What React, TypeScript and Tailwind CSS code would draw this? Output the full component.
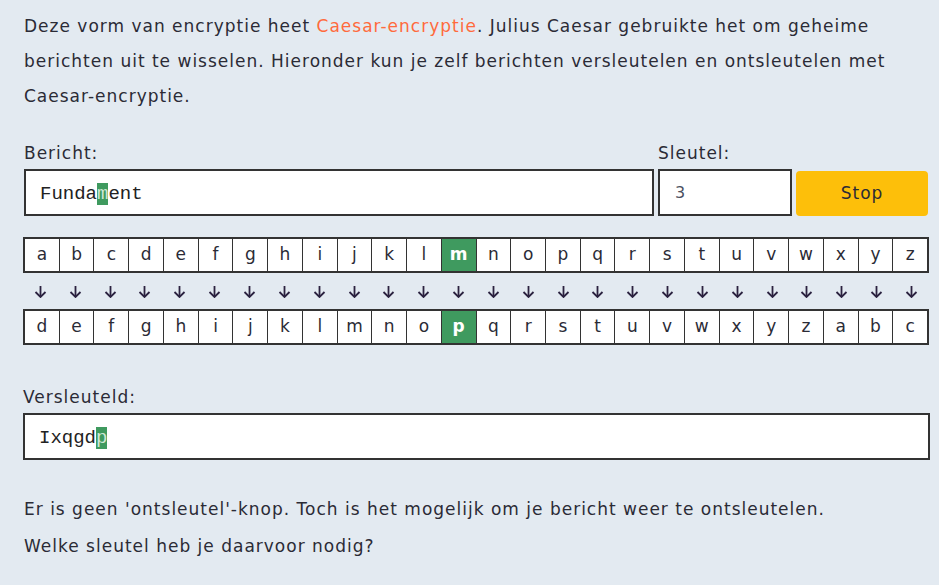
const PLAIN = 'abcdefghijklmnopqrstuvwxyz'.split('');
const KEY = 3;
const ACTIVE = 'm';

function LetterRow({ letters, active }: { letters: string[]; active: string }) {
  return (
    <div className="flex border-2 border-[#333] bg-white">
      {letters.map((ch, i) => (
        <div
          key={i}
          className={`flex-1 h-[32px] flex items-center justify-center text-[17px] ${
            i > 0 ? 'border-l border-[#333]' : ''
          } ${ch === active ? 'bg-[#3f9a5f] text-white font-semibold' : 'text-[#2b2b36]'}`}
        >
          {ch}
        </div>
      ))}
    </div>
  );
}

export default function App() {
  const shifted = PLAIN.map((_, i) => PLAIN[(i + KEY) % 26]);
  const activeOut = PLAIN[(PLAIN.indexOf(ACTIVE) + KEY) % 26];

  return (
    <div
      className="w-[939px] h-[585px] bg-[#e3eaf1] text-[#2b2b36] overflow-hidden"
      style={{ fontFamily: '"DejaVu Sans", "Open Sans", sans-serif' }}
    >
      <div className="pl-[23px] pr-[10px] pt-[9px] w-[939px]">
        <p className="text-[17px] leading-[35px] pl-[1px] tracking-[1px] w-[900px]">
          Deze vorm van encryptie heet <span className="text-[#ff6a3d]">Caesar-encryptie</span>. Julius Caesar
          gebruikte het om geheime berichten uit te wisselen. Hieronder kun je zelf berichten versleutelen en
          ontsleutelen met Caesar-encryptie.
        </p>

        {/* Invoer */}
        <div className="flex mt-[28px] gap-[4px] w-[905px] pl-[1px]">
          <div className="flex-1 flex flex-col">
            <label className="text-[17px] leading-[22px] mb-[5px] tracking-[1px]">Bericht:</label>
            <div className="h-[47px] border-2 border-[#333] bg-white flex items-center pl-[14px] pt-[4px]">
              <span className="text-[19px] text-[#222]" style={{ fontFamily: '"Liberation Mono", monospace' }}>
                Funda<span className="bg-[#3f9a5f] text-[#cfe8d6]">m</span>ent
              </span>
            </div>
          </div>
          <div className="w-[134px] flex flex-col">
            <label className="text-[17px] leading-[22px] mb-[5px] tracking-[1px]">Sleutel:</label>
            <div className="h-[47px] border-2 border-[#333] bg-white flex items-center pl-[15px] text-[16px] text-[#4a5060]">
              3
            </div>
          </div>
          <div className="w-[132px] flex flex-col justify-end">
            <button className="h-[45px] rounded-[4px] bg-[#fdbf0a] text-[17px] text-[#2b2b36] tracking-[1px]">
              Stop
            </button>
          </div>
        </div>

        {/* Alfabet */}
        <div className="w-[906px] mt-[21px]">
          <LetterRow letters={PLAIN} active={ACTIVE} />
          <div className="flex h-[36px] items-center">
            {PLAIN.map((ch) => (
              <div key={ch} className="flex-1 flex justify-center">
                <svg width="13" height="13" viewBox="0 0 13 13" fill="none" stroke="#2b2240" strokeWidth="1.8">
                  <path d="M6.5 1v11" />
                  <path d="M1.5 7l5 5 5-5" />
                </svg>
              </div>
            ))}
          </div>
          <LetterRow letters={shifted} active={activeOut} />
        </div>

        {/* Uitvoer */}
        <div className="w-[907px] mt-[41px]">
          <label className="block text-[17px] leading-[22px] mb-[5px] tracking-[1px]">Versleuteld:</label>
          <div className="h-[47px] border-2 border-[#333] bg-white flex items-center pl-[14px] pt-[4px]">
            <span className="text-[19px] text-[#222]" style={{ fontFamily: '"Liberation Mono", monospace' }}>
              Ixqgd<span className="bg-[#3f9a5f] text-[#cfe8d6]">p</span>
            </span>
          </div>
        </div>

        <p className="text-[17px] leading-[37px] mt-[31px] pl-[1px] tracking-[1px]">
          Er is geen 'ontsleutel'-knop. Toch is het mogelijk om je bericht weer te ontsleutelen.
          <br />
          Welke sleutel heb je daarvoor nodig?
        </p>
      </div>
    </div>
  );
}
